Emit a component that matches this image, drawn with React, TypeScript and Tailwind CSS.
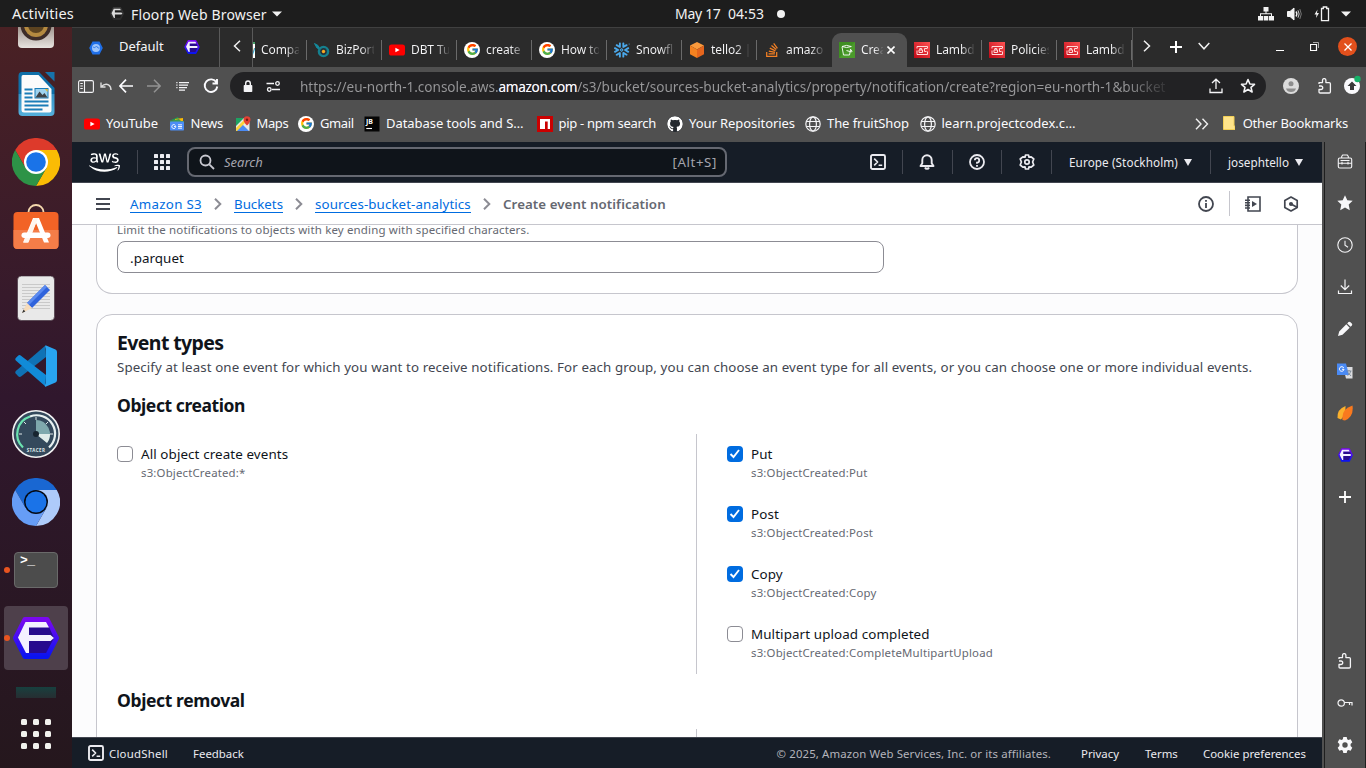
import type { ReactNode } from "react";
import { FaAws, FaGithub, FaStackOverflow } from "react-icons/fa";
import { FcGoogle } from "react-icons/fc";
import { SiSnowflake } from "react-icons/si";

/* ---------- shared drawings ---------- */

function Floorp({ className, mono = false }: { className: string; mono?: boolean }) {
  const id = mono ? "fl-mono" : "fl-color";
  return (
    <svg viewBox="0 0 46 42" className={className}>
      <defs>
        <linearGradient id={id} x1="0" y1="0" x2="0" y2="1">
          <stop offset="0" stopColor={mono ? "#3a3a3a" : "#7a08f0"} />
          <stop offset="1" stopColor={mono ? "#2a2a2a" : "#0a14f0"} />
        </linearGradient>
      </defs>
      <path d="M12 2.500H34L43.500 21L34 39.500H12L2.500 21Z" fill={`url(#${id})`} stroke={`url(#${id})`} strokeWidth="5" strokeLinejoin="round" />
      <path d="M16 10H36L41 21L33 36H16Z" fill={mono ? "#1d1d1d" : "#270a8e"} />
      <path d="M12.500 5H33L36 10.500H16V18H37.500L41 21L37.500 24H16V36H13L5 20.500Z" fill={mono ? "#dcdcdc" : "#f3f0ff"} />
    </svg>
  );
}

function YouTube() {
  return (
    <svg viewBox="0 0 16 16" className="size-4 shrink-0">
      <rect x="0" y="2.500" width="16" height="11" rx="2.600" fill="#f00" />
      <path d="M6.400 5.700L10.600 8L6.400 10.300Z" fill="#fff" />
    </svg>
  );
}

function Google() {
  return (
    <span className="flex size-4 shrink-0 items-center justify-center rounded-full bg-white">
      <FcGoogle className="size-[13px]" />
    </span>
  );
}

function Globe() {
  return (
    <svg viewBox="0 0 16 16" className="size-4 shrink-0" fill="none" stroke="#f4f4f6" strokeWidth="1.200">
      <circle cx="8" cy="8" r="7.200" />
      <ellipse cx="8" cy="8" rx="3.400" ry="7.200" />
      <path d="M1.500 5.500H14.500M1.500 10.500H14.500" />
    </svg>
  );
}

function Puzzle({ className }: { className: string }) {
  return (
    <svg viewBox="0 0 16 16" className={className} fill="none" stroke="#f4f4f6" strokeWidth="1.300" strokeLinejoin="round">
      <path d="M2 6V4.600H5.500V2.300A1.700 1.700 0 0 1 8.900 2.300V4.600H12.200Q13.400 4.600 13.400 5.800V13.800Q13.400 15 12.200 15H3.200Q2 15 2 13.800V11.500H4A1.500 1.500 0 0 0 4 8H2" />
    </svg>
  );
}

function LambdaTile() {
  return (
    <svg viewBox="0 0 16 16" className="size-4 shrink-0">
      <defs>
        <linearGradient id="iam" x1="0" y1="1" x2="1" y2="0">
          <stop offset="0" stopColor="#bd0816" />
          <stop offset="1" stopColor="#ff5252" />
        </linearGradient>
      </defs>
      <rect width="16" height="16" fill="url(#iam)" />
      <g fill="none" stroke="#ffdada" strokeWidth="1">
        <path d="M3 6.500V4.500H13.500V6M3 8.500V12.500H13.500V9.500" />
        <path d="M5 8H8.500V10.500H5ZM5.800 8V6.500H7.700V8M13.500 6.500H10.500V9.500H12.500" />
      </g>
    </svg>
  );
}

function Prompt({ className }: { className: string }) {
  return (
    <svg viewBox="0 0 16 16" className={className} fill="none" stroke="currentColor" strokeWidth="1.900" strokeLinejoin="round">
      <rect x="1" y="1" width="14" height="14" rx="1.500" />
      <path d="M4.200 4.600L7.600 8L4.200 11.400M8.600 11.200H12.200" strokeWidth="1.600" />
    </svg>
  );
}

/* ---------- top bar ---------- */

function TopBar() {
  return (
    <header className="flex h-[27px] shrink-0 items-center bg-[#1d1d1d] text-sm text-[#f2f2f2]">
      <div className="flex w-[600px] items-center pl-3">
        <span className="w-[98px] text-[14.500px] tracking-[0.140px]">Activities</span>
        <Floorp mono className="h-[13px] w-[14px]" />
        <span className="mt-[2px] ml-[7px] tracking-[0.160px]">Floorp Web Browser</span>
        <svg viewBox="0 0 10 6" className="ml-[5px] h-[6px] w-[10px]" fill="#f2f2f2"><path d="M0 0.500H10L5 5.500Z" /></svg>
      </div>
      <div className="flex flex-1 items-center pl-[75px]">
        <span className="w-[53px] tracking-[-0.300px]">May 17</span>
        <span className="tracking-[0.040px]">04:53</span>
        <span className="ml-[13px] size-2 rounded-full bg-[#f2f2f2]" />
      </div>
      <div className="flex items-center pr-[15px]">
        <svg viewBox="0 0 16 14" className="h-[14px] w-4" fill="#f2f2f2">
          <path d="M5.500 0H10.500V4.500H5.500ZM0 9H5V13.500H0ZM5.700 9H10.300V13.500H5.700ZM11 9H16V13.500H11ZM7.500 4.500H8.500V6.200H14V9H13V7.200H3V9H2V6.200H7.500Z" />
        </svg>
        <svg viewBox="0 0 16 14" className="ml-[13px] h-[14px] w-4" fill="none" stroke="#f2f2f2">
          <path d="M0.500 4.500H3L7 1V13L3 9.500H0.500Z" fill="#f2f2f2" />
          <path d="M9 4.500Q10.800 7 9 9.500" strokeWidth="1.300" />
          <path d="M11 3.300Q13.300 7 11 10.700" stroke="#ccc" />
          <path d="M12.800 2Q15.800 7 12.800 12" stroke="#777" />
        </svg>
        <svg viewBox="0 0 16 16" className="ml-[11px] size-4" fill="none" stroke="#f2f2f2" strokeWidth="1.300">
          <path d="M7.500 2.500H9.300V1H12.700V2.500H14.500V14.700H7.500Z" />
          <path d="M3.500 3.500L0.500 8.500H2.500L2 12L5 7H3Z" fill="#f2f2f2" stroke="none" />
        </svg>
        <svg viewBox="0 0 10 6" className="ml-[11px] h-[6px] w-[10px]" fill="#f2f2f2"><path d="M0 0.500H10L5 5.500Z" /></svg>
      </div>
    </header>
  );
}

/* ---------- dock ---------- */

const wheel = {
  top: "M3.200 12A24 24 0 0 1 44.800 12L24 12L24 24L13.600 30Z",
  right: "M44.800 12A24 24 0 0 1 24 48L34.400 30L24 24L24 12Z",
  left: "M24 48A24 24 0 0 1 3.200 12L13.600 30L24 24L34.400 30Z",
};

function Wheel({ top, right, left, ring, hub, r }: { top: string; right: string; left: string; ring: string; hub: string; r: number }) {
  return (
    <svg viewBox="0 0 48 48" className="size-12">
      <path d={wheel.top} fill={top} />
      <path d={wheel.right} fill={right} />
      <path d={wheel.left} fill={left} />
      <circle cx="24" cy="24" r="12" fill={ring} />
      <circle cx="24" cy="24" r={r} fill={hub} />
    </svg>
  );
}

function DockItem({ children, running = false, active = false }: { children: ReactNode; running?: boolean; active?: boolean }) {
  return (
    <div className="flex h-[68px] w-[72px] shrink-0 items-center justify-center">
      <div className={active ? "relative flex size-16 items-center justify-center rounded-[4px] bg-[#4e404b]" : "relative flex size-16 items-center justify-center"}>
        {running && <span className="absolute left-0 size-[6px] rounded-full bg-[#e95420]" />}
        {children}
      </div>
    </div>
  );
}

function Dock() {
  return (
    <nav className="flex w-[72px] shrink-0 flex-col bg-gradient-to-b from-[#4a2124] via-[#30172d] to-[#25171d]">
      <div className="flex h-[671px] flex-col overflow-hidden">
        <div className="-mt-[35px] flex flex-col">
          <DockItem>
            <svg viewBox="0 0 36 46" className="h-[46px] w-9">
              <defs>
                <linearGradient id="spk" x1="0" y1="0" x2="0" y2="1"><stop offset="0.400" stopColor="#8d7f78" /><stop offset="1" stopColor="#e8e4e0" /></linearGradient>
              </defs>
              <rect width="36" height="45" rx="4" fill="url(#spk)" />
              <circle cx="18" cy="22" r="15.500" fill="#3d2c28" />
              <circle cx="18" cy="22" r="12" fill="#b48a40" />
              <circle cx="18" cy="22" r="8" fill="#5c4320" />
            </svg>
          </DockItem>
          <DockItem>
            <svg viewBox="0 0 37 46" className="h-[46px] w-[37px]">
              <defs>
                <linearGradient id="wr" x1="0" y1="0" x2="0" y2="1"><stop offset="0.500" stopColor="#0f6fa8" /><stop offset="0.510" stopColor="#3593c6" /><stop offset="1" stopColor="#55b0dc" /></linearGradient>
              </defs>
              <path d="M4 1H21L36.500 17V41Q36.500 45 32.500 45H4.500Q0.500 45 0.500 41V5Q0.500 1 4 1Z" fill="url(#wr)" />
              <path d="M27 1H36.500V10.500Z" fill="#1673ab" />
              <path d="M5 4H20.500L33.500 18V39.500Q33.500 41.500 31.500 41.500H6Q3.500 41.500 3.500 39V6Q3.500 4 5 4Z" fill="#fbfbfb" />
              <path d="M6.500 18.500H14.500M6.500 22.500H14.500M6.500 26.500H14.500M6.500 30.500H30.500M6.500 34.500H30.500M6.500 38.500H24.500" stroke="#1b7db8" strokeWidth="2" />
              <rect x="16.500" y="17" width="14" height="10.500" fill="#1b7db8" />
              <rect x="17.500" y="18" width="12" height="8.500" fill="#9fd3ef" />
              <path d="M17.500 26.500L21.500 20.500L24.500 24L26.500 22L29.500 26.500Z" fill="#3f4347" />
              <path d="M27 18H29.500V21Z" fill="#f6b913" />
            </svg>
          </DockItem>
          <DockItem><Wheel top="#dd3a2b" right="#fbbc04" left="#2d9347" ring="#fff" hub="#1a73e8" r={9.800} /></DockItem>
          <DockItem>
            <svg viewBox="0 0 46 48" className="-mt-[6px] h-12 w-[46px]">
              <path d="M15.500 12V9A7.500 7 0 0 1 30.500 9V12" fill="none" stroke="#f5d9ae" strokeWidth="1.800" />
              <rect x="0.500" y="9" width="45" height="37" rx="4" fill="#f26326" />
              <path d="M0.500 27H45.500V42Q45.500 46 41.500 46H4.500Q0.500 46 0.500 42Z" fill="#f47d48" />
              <path d="M20 15H26L36 39.500H31L23 20L15 39.500H10Z" fill="#fff" />
              <path d="M21 15H25L15.500 39.500H10.500Z" fill="#fff6ef" />
              <rect x="8.500" y="29.500" width="29" height="5.500" rx="2.700" fill="#fff" />
            </svg>
          </DockItem>
          <DockItem>
            <svg viewBox="0 0 38 46" className="h-[46px] w-[38px]">
              <rect x="0.500" y="1" width="37" height="44.500" rx="4" fill="#e9e9e9" stroke="#3a2a35" strokeWidth="0.600" />
              <path d="M5 9.500H33M5 12.500H33M5 15.500H33M5 18.500H33M5 21.500H33M5 24.500H33M5 27.500H33M5 30.500H33M5 33.500H33" stroke="#c9c9c9" />
              <path d="M28 10L33 15L15 33L10 28Z" fill="#2f63dc" />
              <path d="M28 10L30 12L12 30L10 28Z" fill="#5a8af0" />
              <path d="M10 28L15 33L5 38Z" fill="#f6dcbb" />
              <path d="M6.600 34.500L8.300 36.400L5 38Z" fill="#333" />
            </svg>
          </DockItem>
          <DockItem>
            <svg viewBox="0 0 42 42" className="size-[42px]">
              <path d="M30.500 0.500L31 12L6 31.500Q4.500 32.500 3 31L0.700 28.500Q-0.300 27.300 0.800 26Z" fill="#0f72b5" />
              <path d="M31 30L30.500 41.500L0.800 15.500Q-0.300 14.300 0.800 13L3 10.800Q4.500 9.500 6 10.700Z" fill="#118bd8" />
              <path d="M30.500 0.300L40.500 4.500Q42 5.300 42 7V35Q42 36.700 40.500 37.500L30.500 41.800Q29 41.500 31 38V4Q29.500 1 30.500 0.300Z" fill="#28a4f0" />
            </svg>
          </DockItem>
          <DockItem>
            <svg viewBox="0 0 48 48" className="size-12">
              <circle cx="24" cy="24" r="23.200" fill="#34495c" stroke="#f2f2f2" strokeWidth="1.600" />
              <path d="M11 37.500A18.500 18.500 0 0 1 18 6.500" fill="none" stroke="#6be3b0" strokeWidth="2.200" />
              <path d="M18 6.500A18.500 18.500 0 0 1 37 37.500" fill="none" stroke="#e8f1f1" strokeWidth="2.200" />
              <path d="M24 24V10A14 14 0 0 1 35 32.500Z" fill="#7fa9ad" />
              <path d="M24 24L38 24A14 14 0 0 1 35 33Z" fill="#e0ece9" />
              <circle cx="24" cy="24" r="3" fill="#17242f" />
              <path d="M24 7V10M7 24H10M38 24H41M12 12L14 14M36 12L34 14" stroke="#dfe8e8" strokeWidth="1" />
              <text x="24" y="41.500" textAnchor="middle" fontSize="4.500" fontWeight="700" letterSpacing="0.400" fill="#dfe8e8">STACER</text>
            </svg>
          </DockItem>
          <DockItem><Wheel top="#1967d2" right="#aecbfa" left="#669df6" ring="#050a14" hub="#1a73e8" r={10.500} /></DockItem>
          <DockItem running>
            <div className="flex h-9 w-11 items-start rounded-[4px] border border-[#6a6a6a] bg-[#4c4c4c] pl-[5px] font-['Liberation_Mono'] text-[13px] leading-4 font-bold tracking-[-0.500px] text-white">&gt;_</div>
          </DockItem>
          <DockItem running active><Floorp className="h-[42px] w-[46px]" /></DockItem>
          <DockItem>
            <div className="h-[38px] w-10 bg-gradient-to-b from-[#16403f] to-[#2a1a24] to-60%" />
          </DockItem>
        </div>
      </div>
      <div className="mt-px grid flex-1 grid-cols-[6px_6px_6px] grid-rows-[6px_6px_6px] content-center justify-center gap-[6px]">
        {[0, 1, 2, 3, 4, 5, 6, 7, 8].map((i) => <span key={i} className="rounded-[1.500px] bg-[#f2f2ee]" />)}
      </div>
    </nav>
  );
}

/* ---------- tab strip ---------- */

function Cube() {
  return (
    <svg viewBox="0 0 16 16" className="size-4 shrink-0">
      <path d="M8 0L15 3.600L8 7.400L1 3.600Z" fill="#fb9a3c" />
      <path d="M1 3.600L8 7.400V16L1 12.300Z" fill="#f58220" />
      <path d="M15 3.600L8 7.400V16L15 12.300Z" fill="#e5651d" />
    </svg>
  );
}

function BizPortal() {
  return (
    <svg viewBox="0 0 16 16" className="size-4 shrink-0">
      <path d="M0.500 1.500L4 3.500L6 7L3 6Z" fill="#158a9c" stroke="#158a9c" />
      <circle cx="9.500" cy="9.500" r="4.600" fill="#24333a" stroke="#15808f" strokeWidth="2.400" />
      <circle cx="9.500" cy="9.500" r="1.700" fill="#f6a821" />
    </svg>
  );
}

function Bucket() {
  return (
    <svg viewBox="0 0 16 16" className="size-4 shrink-0">
      <rect width="16" height="16" fill="#3f8f22" />
      <path d="M0 16L16 0V16Z" fill="#54a332" opacity="0.600" />
      <path d="M3 4.800L4.500 13H10.500L11.700 7M3 4.500Q7.500 2.300 12.300 4.500Q7.500 6.600 3 4.500M7.500 8.500L12.500 10Q14 9.500 11.700 7.500" fill="none" stroke="#fff" strokeWidth="0.900" />
    </svg>
  );
}

const tabs: { label: string; icon: ReactNode }[] = [
  { label: "Compa", icon: <span className="size-4 shrink-0 border-t-2 border-[#4aa36a] bg-white text-right text-[11px] leading-3 text-[#158a9c]">y</span> },
  { label: "BizPort", icon: <BizPortal /> },
  { label: "DBT Tu", icon: <YouTube /> },
  { label: "create", icon: <Google /> },
  { label: "How to", icon: <Google /> },
  { label: "Snowfl", icon: <SiSnowflake className="size-4 shrink-0 text-[#4aa8ea]" /> },
  { label: "tello2 |", icon: <Cube /> },
  { label: "amazon", icon: <FaStackOverflow className="size-4 shrink-0 text-[#f48024]" /> },
  { label: "Crea", icon: <Bucket /> },
  { label: "Lambd", icon: <LambdaTile /> },
  { label: "Policies", icon: <LambdaTile /> },
  { label: "Lambd", icon: <LambdaTile /> },
];

function TabStrip() {
  return (
    <div className="flex h-10 shrink-0 items-stretch border-t border-[#404040] bg-[#2b2b2b] text-[#f6f6f8]">
      <div className="flex w-[148px] items-center border-r border-[#5a5a5a] pl-[17px] text-[13px]">
        <svg viewBox="0 0 14 14" className="size-[14px]">
          <path d="M3.500 0.500H10.500L13.800 7L10.500 13.500H3.500L0.200 7Z" fill="#1f6fe8" />
          <circle cx="7" cy="7" r="4" fill="#9cc4fb" />
          <path d="M4 6Q6 8 7.500 5Q9 8 10.500 7" stroke="#3b82ec" fill="none" />
        </svg>
        <span className="-mt-[2px] ml-4 w-[65px]">Default</span>
        <Floorp className="-mt-[2px] h-[14px] w-4" />
      </div>
      <div className="flex w-[33px] items-center justify-center border-r border-[#5a5a5a] pb-[3px] pl-[2px]">
        <svg viewBox="0 0 8 12" className="h-3 w-2" fill="none" stroke="#f0f0f0" strokeWidth="1.500"><path d="M7 0.700L1.500 6L7 11.300" /></svg>
      </div>
      <div className="flex w-[879px] justify-end overflow-hidden text-xs tracking-[-0.100px]">
        {tabs.map((t, i) => (
          <div key={i} className={i === 8 ? "flex w-[75px] shrink-0 flex-col justify-end" : "flex w-[75px] shrink-0 flex-col justify-center pt-[4px]"}>
            <div className={i === 8 ? "flex h-[34px] items-center rounded-t-[9px] bg-[#505050] pl-[7px]" : i === 7 ? "flex h-5 items-center pl-[7px]" : "flex h-5 items-center border-r border-[#6a6a6a] pl-[7px]"}>
              {t.icon}
              <span className={i === 8
                ? "ml-[6px] w-[22px] overflow-hidden bg-gradient-to-r from-[#f6f6f8] from-60% to-[#f6f6f8]/10 bg-clip-text whitespace-nowrap text-transparent"
                : "ml-[6px] w-[38px] overflow-hidden bg-gradient-to-r from-[#f6f6f8] from-65% to-[#f6f6f8]/10 bg-clip-text whitespace-nowrap text-transparent"}>{t.label}</span>
              {i === 8 && <svg viewBox="0 0 8 8" className="ml-1 size-2 shrink-0" stroke="#fff" strokeWidth="1.600"><path d="M0.500 0.500L7.500 7.500M7.500 0.500L0.500 7.500" /></svg>}
            </div>
          </div>
        ))}
      </div>
      <div className="flex flex-1 items-center border-l border-[#5a5a5a] pl-[10px]">
        <svg viewBox="0 0 8 12" className="mb-[3px] h-3 w-2" fill="none" stroke="#f0f0f0" strokeWidth="1.500"><path d="M1 0.700L6.500 6L1 11.300" /></svg>
        <svg viewBox="0 0 12 12" className="mb-[2px] ml-[19px] size-3" stroke="#fff" strokeWidth="2"><path d="M6 0V12M0 6H12" /></svg>
        <svg viewBox="0 0 12 8" className="mb-[3px] ml-4 h-2 w-3" fill="none" stroke="#f0f0f0" strokeWidth="1.500"><path d="M0.700 1L6 6.800L11.300 1" /></svg>
        <span className="mt-[5px] ml-[66px] h-px w-2 bg-white" />
        <svg viewBox="0 0 9 9" className="mb-[2px] ml-[26px] size-[9px]" fill="none" stroke="#fff"><path d="M0.500 2.500H6.500V8.500H0.500Z" strokeWidth="1.200" /><path d="M3 0.500H8.500V6" stroke="#aaa" /></svg>
        <span className="mb-[2px] ml-[19px] flex size-[19px] items-center justify-center rounded-full bg-[#e2501c]">
          <svg viewBox="0 0 8 8" className="size-2" stroke="#fff" strokeWidth="1.300"><path d="M0.500 0.500L7.500 7.500M7.500 0.500L0.500 7.500" /></svg>
        </span>
      </div>
    </div>
  );
}

/* ---------- navigation bar ---------- */

function NavBar() {
  return (
    <div className="flex h-[38px] shrink-0 items-center pl-[6px]">
      <svg viewBox="0 0 16 13" className="h-[13px] w-4 shrink-0" fill="none" stroke="#f4f4f6" strokeWidth="1.100">
        <rect x="0.600" y="0.600" width="14.800" height="11.800" rx="1.500" />
        <path d="M6.500 0.600V12.400M2.300 3.500H4.800M2.300 6H4.800M2.300 8.500H4.800" />
      </svg>
      <svg viewBox="0 0 12 9" className="ml-[6px] h-[9px] w-3 shrink-0" fill="none" stroke="#dcdcdc" strokeWidth="1.400"><path d="M1 0.500V5H5.500M1.300 4.500Q5 1 8.500 2.800Q11 4.300 11 8" /></svg>
      <svg viewBox="0 0 14 14" className="ml-[7px] size-[14px] shrink-0" fill="none" stroke="#fbfbfe" strokeWidth="1.700"><path d="M7 0.700L0.900 7L7 13.300M1 7H14" /></svg>
      <svg viewBox="0 0 14 14" className="ml-[14px] size-[14px] shrink-0" fill="none" stroke="#929292" strokeWidth="1.500"><path d="M7 0.700L13.100 7L7 13.300M13 7H0" /></svg>
      <svg viewBox="0 0 13 9" className="ml-[15px] h-[9px] w-[13px] shrink-0" stroke="#f4f4f6" strokeWidth="1.200"><path d="M3 0.700H13M3 3.200H12M3 5.700H11M3 8.200H9M0.300 0.700H1.500M0.300 3.200H1.500M0.300 5.700H1.500" /></svg>
      <svg viewBox="0 0 16 16" className="ml-[14px] size-4 shrink-0" fill="none" stroke="#fbfbfe" strokeWidth="1.900"><path d="M13.500 4.500A6.300 6.300 0 1 0 14.300 8.500M14 1V5.500H9.500" /></svg>
      <div className="ml-[11px] flex h-7 w-[1036px] shrink-0 items-center rounded-full bg-[#222224] pl-[13px]">
        <svg viewBox="0 0 10 13" className="h-[13px] w-[10px]"><rect x="0.700" y="5" width="8.600" height="7" rx="0.800" fill="#f4f4f6" /><path d="M2.700 5.500V3.300A2.300 2.300 0 0 1 7.300 3.300V5.500" fill="none" stroke="#f4f4f6" strokeWidth="1.400" /></svg>
        <svg viewBox="0 0 15 11" className="ml-[13px] h-[11px] w-[15px]" fill="none" stroke="#f4f4f6" strokeWidth="1.300"><circle cx="11.500" cy="2.500" r="1.800" /><circle cx="3.300" cy="8.500" r="1.800" /><path d="M0.500 2.500H8M6 8.500H14" /></svg>
        <div className="mt-[2px] ml-[19px] flex w-[868px] overflow-hidden bg-gradient-to-r from-[#98989a] from-95% to-[#98989a]/10 bg-clip-text text-[13.600px] whitespace-nowrap text-transparent">
          <span className="tracking-[-0.040px]">https://eu-north-1.console.aws.</span>
          <span className="tracking-[-0.350px] text-[#fbfbfe]">amazon.com</span>
          <span>/s3/bucket/sources-bucket-analytics/property/notification/create?region=eu-north-1&amp;bucket</span>
        </div>
        <svg viewBox="0 0 14 16" className="ml-[41px] h-4 w-[14px]" fill="none" stroke="#f4f4f6" strokeWidth="1.300"><path d="M7 11V1.300M3 5L7 1.200L11 5M1 10.500V14.500H13V10.500" /></svg>
        <svg viewBox="0 0 16 16" className="ml-[17px] size-4" fill="none" stroke="#f4f4f6" strokeWidth="1.600" strokeLinejoin="round"><path d="M8 1.500L9.900 6L14.500 6.300L11 9.400L12.100 14L8 11.500L3.900 14L5 9.400L1.500 6.300L6.100 6Z" /></svg>
      </div>
      <svg viewBox="0 0 16 16" className="ml-[17px] size-4 shrink-0"><circle cx="8" cy="8" r="8" fill="#dcdcdc" /><circle cx="8" cy="5.800" r="2.500" fill="#8d8d8d" /><path d="M3 10.500H13Q12 14 8 14Q4 14 3 10.500Z" fill="#8d8d8d" /></svg>
      <Puzzle className="ml-[18px] size-4 shrink-0" />
      <svg viewBox="0 0 20 20" className="mb-[3px] ml-[10px] size-5 shrink-0"><circle cx="9" cy="11" r="8" fill="#fbfbfe" /><path d="M9 6.500L13.500 11H11V15H7V11H4.500Z" fill="#3a3a3a" /><circle cx="14.500" cy="4" r="3.200" fill="#17b169" /></svg>
    </div>
  );
}

/* ---------- bookmarks ---------- */

function Bookmark({ icon, label, className }: { icon: ReactNode; label: string; className: string }) {
  return <div className={`flex shrink-0 items-center gap-[6px] whitespace-nowrap ${className}`}>{icon}<span>{label}</span></div>;
}

function Bookmarks() {
  return (
    <div className="flex h-[37px] shrink-0 items-center pl-3 text-[13px] text-[#fbfbfe]">
      <Bookmark className="w-[84.500px] tracking-[-0.080px]" label="YouTube" icon={<YouTube />} />
      <Bookmark className="w-[66px] tracking-[-0.200px]" label="News" icon={
        <svg viewBox="0 0 16 16" className="size-4"><path d="M2 4L9 1L11 6Z" fill="#1e9c50" /><path d="M6 3L14 2V8H6Z" fill="#fbbc04" /><path d="M1 4.500H3L10 3L12 5L15 5V7H1Z" fill="#3f9b4f" /><rect x="1" y="5.500" width="14" height="9" rx="0.800" fill="#4d8df6" /><path d="M6.500 9.500A2 2 0 1 0 6.800 10.500H5M9 8.800H13M9 10.500H13M9 12.200H13" stroke="#fff" fill="none" strokeWidth="0.900" /></svg>
      } />
      <Bookmark className="w-[63.500px] tracking-[-0.400px]" label="Maps" icon={
        <svg viewBox="0 0 16 16" className="size-4"><rect x="1" y="2" width="13.500" height="13" fill="#e8e8e8" /><path d="M1 2H9L1 10Z" fill="#1ea362" /><path d="M1 15L7 8L14 15Z" fill="#4b8bf4" /><path d="M1 12L10 3L12 5L2 15H1Z" fill="#fdd23c" /><path d="M12 9.500Q8.500 6 8.500 3.700A3.500 3.500 0 0 1 15.500 3.700Q15.500 6 12 9.500Z" fill="#e34133" /><circle cx="12" cy="3.800" r="1.200" fill="#7a1a12" /></svg>
      } />
      <Bookmark className="w-[66px] tracking-[-0.400px]" label="Gmail" icon={<Google />} />
      <Bookmark className="w-[172.500px] tracking-[-0.050px]" label="Database tools and S…" icon={
        <svg viewBox="0 0 16 16" className="size-4"><rect x="0.500" y="0.500" width="15" height="15" fill="#050505" /><text x="2" y="8" fontSize="7" fontWeight="700" fill="#fff">JB</text><path d="M2.300 12.500H8" stroke="#fff" strokeWidth="1.100" /></svg>
      } />
      <Bookmark className="w-[130.500px] tracking-[-0.290px]" label="pip - npm search" icon={
        <svg viewBox="0 0 16 16" className="size-4"><rect width="16" height="16" fill="#cb0000" /><path d="M3 3H13V13H10.700V5.500H8V13H3Z" fill="#fff" /></svg>
      } />
      <Bookmark className="w-[138px] tracking-[-0.060px]" label="Your Repositories" icon={
        <span className="flex size-4 items-center justify-center rounded-full bg-[#24292f]"><FaGithub className="size-4 rounded-full text-white" /></span>
      } />
      <Bookmark className="w-[114.500px] tracking-[-0.070px]" label="The fruitShop" icon={<Globe />} />
      <Bookmark className="flex-1 tracking-[0.020px]" label="learn.projectcodex.c…" icon={<Globe />} />
      <svg viewBox="0 0 14 12" className="h-3 w-[14px]" fill="none" stroke="#f0f0f0" strokeWidth="1.400"><path d="M1 0.700L6 6L1 11.300M7.500 0.700L12.500 6L7.500 11.300" /></svg>
      <svg viewBox="0 0 12 14" className="mb-[2px] ml-[14px] h-[14px] w-3"><path d="M0.500 0.500H11V10H12V13.500H0.500Z" fill="#ffe48a" stroke="#f2cf56" /></svg>
      <span className="mr-[18px] ml-[8px] tracking-[-0.180px]">Other Bookmarks</span>
    </div>
  );
}

/* ---------- AWS console ---------- */

function Rule({ className }: { className: string }) {
  return <span className={`h-6 w-px shrink-0 bg-[#424650] ${className}`} />;
}

function Caret({ className }: { className: string }) {
  return <svg viewBox="0 0 8 7" className={`h-[7px] w-2 ${className}`} fill="#ebebf0"><path d="M0 0H8L4 7Z" /></svg>;
}

function AwsHeader() {
  return (
    <div className="flex h-[41px] shrink-0 items-center border-b border-[#424650] bg-[#161d27] pl-[17px] text-[#ebebf0]">
      <FaAws className="h-[25px] w-[31px] text-white" />
      <Rule className="ml-[17px]" />
      <div className="ml-4 grid grid-cols-3 gap-[2px]">
        {[0, 1, 2, 3, 4, 5, 6, 7, 8].map((i) => <span key={i} className="size-1 rounded-[0.500px] bg-[#ebebf0]" />)}
      </div>
      <div className="ml-[17px] flex h-[30px] w-[540px] items-center rounded-lg border-2 border-[#656871] bg-[#0f141a] px-[10px] text-[13px]">
        <svg viewBox="0 0 16 16" className="size-4" fill="none" stroke="#c9c9d1" strokeWidth="1.800"><circle cx="6.500" cy="6.500" r="5" /><path d="M10.300 10.300L15 15" /></svg>
        <span className="mt-[2px] ml-[9px] flex-1 text-[#a4a4ad] italic">Search</span>
        <span className="mt-[2px] -mr-[2px] text-[13.300px] tracking-[0.600px] text-[#a4a4ad]">[Alt+S]</span>
      </div>
      <Prompt className="ml-[143px] size-4" />
      <Rule className="ml-4" />
      <svg viewBox="0 0 16 16" className="ml-4 size-4" fill="none" stroke="#ebebf0" strokeWidth="1.900" strokeLinejoin="round"><path d="M1.500 12H14.500L12.700 9.300V6A4.700 4.700 0 0 0 3.300 6V9.300Z" /><path d="M6 13.500A2.200 2.200 0 0 0 10 13.500" /></svg>
      <Rule className="ml-[17px]" />
      <svg viewBox="0 0 16 16" className="ml-4 size-4" fill="none" stroke="#ebebf0" strokeWidth="1.800"><circle cx="8" cy="8" r="7" /><path d="M5.800 6.300A2.200 2.200 0 1 1 8 8.600V9.800M8 11V12.700" /></svg>
      <Rule className="ml-4" />
      <svg viewBox="0 0 16 16" className="ml-[17px] size-4" fill="none" stroke="#ebebf0" strokeWidth="1.700" strokeLinejoin="round"><path d="M6.500 1H9.500L10 3.200L12.200 2.900L14.800 5L13.600 8L14.800 11L12.200 13.100L10 12.800L9.500 15H6.500L6 12.800L3.800 13.100L1.200 11L2.400 8L1.200 5L3.800 2.900L6 3.200Z" /><circle cx="8" cy="8" r="2.200" /></svg>
      <Rule className="ml-4" />
      <span className="mt-[2px] ml-[17px] w-[115px] text-[11.700px] tracking-[0.110px] whitespace-nowrap">Europe (Stockholm)</span>
      <Caret className="" />
      <Rule className="ml-[18px]" />
      <span className="mt-[2px] ml-[17px] w-[67px] text-[11.700px] tracking-[0.040px]">josephtello</span>
      <Caret className="" />
    </div>
  );
}

function Chevron() {
  return <svg viewBox="0 0 8 12" className="h-3 w-2 shrink-0" fill="none" stroke="#8c8c94" strokeWidth="2"><path d="M1 0.800L6.300 6L1 11.200" /></svg>;
}

function Crumb({ label, className }: { label: string; className: string }) {
  return <a className={`h-[18px] border-b border-[#006ce0] leading-[19px] whitespace-nowrap text-[#006ce0] ${className}`}>{label}</a>;
}

function Breadcrumbs() {
  return (
    <div className="flex h-[42px] shrink-0 items-center border-b border-[#c6c6cd] bg-white pl-6 text-[13.300px]">
      <svg viewBox="0 0 14 12" className="h-3 w-[14px]" stroke="#424650" strokeWidth="2"><path d="M0 1H14M0 6H14M0 11H14" /></svg>
      <Crumb label="Amazon S3" className="ml-5 w-[72px] tracking-[0.300px]" />
      <div className="ml-3 flex"><Chevron /></div>
      <Crumb label="Buckets" className="ml-3 w-[49px] tracking-[0px]" />
      <div className="ml-3 flex"><Chevron /></div>
      <Crumb label="sources-bucket-analytics" className="ml-3 w-[156px] tracking-[0.110px]" />
      <div className="ml-3 flex"><Chevron /></div>
      <span className="mt-[2px] ml-3 flex-1 font-semibold tracking-[0.070px] text-[#656871]">Create event notification</span>
      <svg viewBox="0 0 16 16" className="size-4" fill="none" stroke="#424650" strokeWidth="1.800"><circle cx="8" cy="8" r="7" /><path d="M8 4V5.800M8 7V12" /></svg>
      <span className="ml-[15px] h-[25px] w-px bg-[#c6c6cd]" />
      <svg viewBox="0 0 16 16" className="ml-[15px] size-4" fill="none" stroke="#424650" strokeWidth="1.600"><path d="M3 1H15V15H3ZM0 4.200H5M0 6.800H5M0 9.400H5M0 12H5" /><path d="M7 5V11L12 8Z" fill="#424650" stroke="none" /></svg>
      <svg viewBox="0 0 16 16" className="mr-[23px] ml-[22px] size-4" fill="none" stroke="#424650" strokeWidth="1.700" strokeLinejoin="round"><path d="M8 1L14.200 4.500V11.500L8 15L1.800 11.500V4.500Z" /><circle cx="8" cy="8" r="1.200" fill="#424650" /><path d="M8 8L14 11.300" /></svg>
    </div>
  );
}

function Check({ on = false }: { on?: boolean }) {
  return on ? (
    <span className="mt-[2px] flex size-4 shrink-0 items-center justify-center rounded-[4px] bg-[#006ce0]">
      <svg viewBox="0 0 16 16" className="size-4" fill="none" stroke="#fff" strokeWidth="1.900"><path d="M3.500 8L6.500 11L12 4" /></svg>
    </span>
  ) : (
    <span className="mt-[2px] size-4 shrink-0 rounded-[4px] border border-[#8c8c94] bg-white" />
  );
}

function Option({ label, note, on }: { label: string; note: string; on?: boolean }) {
  return (
    <div className="flex h-[60px] gap-2">
      <Check on={on} />
      <div>
        <div className="text-[13.400px] leading-5 tracking-[0.100px] text-[#0f141a]">{label}</div>
        <div className="mt-[0.500px] text-[11.400px] leading-4 tracking-[0.180px] text-[#656871]">{note}</div>
      </div>
    </div>
  );
}

function Content() {
  return (
    <main className="flex min-h-0 flex-1 flex-col overflow-hidden bg-[#fcfcfd] px-6">
      <section className="flex h-[69px] w-[1202px] shrink-0 flex-col rounded-b-2xl border border-t-0 border-[#c6c6cd] bg-white pl-5">
        <p className="-mt-[3px] h-[19px] text-[11.500px] leading-4 tracking-[0.145px] whitespace-nowrap text-[#656871]">Limit the notifications to objects with key ending with specified characters.</p>
        <div className="flex h-8 w-[767px] shrink-0 items-center rounded-lg border border-[#8c8c94] bg-white pt-[2px] pl-3 text-[13.400px] tracking-[0.050px] text-[#0f141a]">.parquet</div>
      </section>
      <section className="mt-5 flex h-[500px] w-[1202px] shrink-0 flex-col rounded-t-2xl border border-[#c6c6cd] bg-white px-5 pt-4">
        <h2 className="text-[19.500px] leading-6 font-bold tracking-[-0.620px] text-[#0f141a]">Event types</h2>
        <p className="mt-[2px] text-[13.300px] leading-5 tracking-[0.107px] whitespace-nowrap text-[#424650]">Specify at least one event for which you want to receive notifications. For each group, you can choose an event type for all events, or you can choose one or more individual events.</p>
        <h3 className="mt-[17px] text-[17.500px] leading-[23px] font-bold tracking-[-0.420px] text-[#0f141a]">Object creation</h3>
        <div className="mt-[17px] flex h-60 shrink-0">
          <div className="w-[579px] pt-[10px]">
            <Option label="All object create events" note="s3:ObjectCreated:*" />
          </div>
          <div className="border-l border-[#c6c6cd] pt-[10px] pl-[30px]">
            <Option on label="Put" note="s3:ObjectCreated:Put" />
            <Option on label="Post" note="s3:ObjectCreated:Post" />
            <Option on label="Copy" note="s3:ObjectCreated:Copy" />
            <Option label="Multipart upload completed" note="s3:ObjectCreated:CompleteMultipartUpload" />
          </div>
        </div>
        <h3 className="mt-[15px] text-[17.500px] leading-[23px] font-bold tracking-[-0.380px] text-[#0f141a]">Object removal</h3>
        <div className="mt-[17px] ml-[579px] flex-1 border-l border-[#c6c6cd]" />
      </section>
    </main>
  );
}

function Footer() {
  return (
    <footer className="flex h-[31px] shrink-0 items-center border-t border-[#424650] bg-[#161d27] pr-4 pl-4 text-[11.400px] text-[#ebebf0]">
      <Prompt className="size-4" />
      <span className="mt-[2px] ml-[5px] w-[84px] tracking-[0.230px]">CloudShell</span>
      <span className="mt-[2px] flex-1 tracking-[0.020px]">Feedback</span>
      <span className="mt-[2px] tracking-[0.120px] text-[#b4b4bb]">© 2025, Amazon Web Services, Inc. or its affiliates.</span>
      <span className="mt-[2px] ml-[30px] w-[64px]">Privacy</span>
      <span className="mt-[2px] w-[58px]">Terms</span>
      <span className="mt-[2px] w-[103px] whitespace-nowrap">Cookie preferences</span>
    </footer>
  );
}

/* ---------- right rail ---------- */

function Rail() {
  const cell = "flex h-[42px] items-center justify-center";
  return (
    <aside className="flex w-[44px] shrink-0 bg-[#505050] pl-[2px]">
      <div className="flex flex-1 flex-col border-x border-[#1f1f1f]">
        <div className="flex h-10 items-center justify-center">
          <svg viewBox="0 0 16 16" className="size-4" fill="none" stroke="#f4f4f6" strokeWidth="1.100"><rect x="1.300" y="4" width="13.400" height="10" rx="1.500" /><path d="M4.700 4V2.500L5.700 1H10.300L11.300 2.500V4M3.500 6.500H12.500M1.300 9.200H14.700M5 7.800V10.500M11 7.800V10.500" /></svg>
        </div>
        <div className={cell}><svg viewBox="0 0 16 16" className="size-4" fill="#f8f8fa"><path d="M8 0.300L10.300 5.200L15.700 5.800L11.700 9.500L12.800 15.200L8 12.400L3.200 15.200L4.300 9.500L0.300 5.800L5.700 5.200Z" /></svg></div>
        <div className={cell}><svg viewBox="0 0 16 16" className="size-4" fill="none" stroke="#f4f4f6" strokeWidth="1.100"><circle cx="8" cy="8" r="7.200" /><path d="M8 3.800V8.300L11 10.300" /></svg></div>
        <div className={cell}><svg viewBox="0 0 16 16" className="size-4" fill="none" stroke="#f4f4f6" strokeWidth="1.200"><path d="M8 0.500V10.500M3.800 6.500L8 10.600L12.200 6.500M1.500 11.500V14.500H14.500V11.500" /></svg></div>
        <div className={cell}><svg viewBox="0 0 16 16" className="size-4" fill="#f8f8fa"><path d="M1 15L2.200 10.500L9.300 3.300L12.700 6.700L5.500 13.800ZM10.200 2.400L11.500 1.100Q12.500 0.300 13.500 1.200L14.800 2.500Q15.700 3.500 14.900 4.500L13.600 5.800Z" /></svg></div>
        <div className={cell}>
          <svg viewBox="0 0 16 16" className="size-4"><path d="M6 4H15.500V15.500H9Z" fill="#dcdde0" /><path d="M0 0.500H9L12 12H0Z" fill="#4a8af4" /><path d="M6.800 5A2.300 2.300 0 1 0 7 6.300H5" fill="none" stroke="#fff" /><path d="M9.500 8H14.500M12 7V8M10.500 12.500Q13.500 11 13.700 8M11 9.500L14 13" stroke="#7a8794" fill="none" strokeWidth="0.900" /></svg>
        </div>
        <div className={cell}>
          <svg viewBox="0 0 16 16" className="size-4"><path d="M0.500 13Q0 4 8.500 1Q9 9 4 14.500Z" fill="#fbb02c" /><path d="M5.500 15Q4 4 15.500 0.500Q17 12 8 15.500Z" fill="#f9791e" /></svg>
        </div>
        <div className={cell}><Floorp className="h-[14px] w-[15px]" /></div>
        <div className={cell}><svg viewBox="0 0 12 12" className="size-3" stroke="#fff" strokeWidth="1.800"><path d="M6 0V12M0 6H12" /></svg></div>
        <div className="flex-1" />
        <div className={cell}><Puzzle className="size-4" /></div>
        <div className={cell}><svg viewBox="0 0 16 16" className="size-4" fill="none" stroke="#f4f4f6" strokeWidth="1.200"><circle cx="4.200" cy="8" r="3.200" /><path d="M7.400 7.500H15V10.500M12.500 7.500V10" /></svg></div>
        <div className={cell}><svg viewBox="0 0 16 16" className="size-4" fill="#f8f8fa" fillRule="evenodd"><path d="M6.300 0H9.700L10.200 2.300L11.300 2.900L13.600 2.200L15.300 5.200L13.600 6.900V9.100L15.300 10.800L13.600 13.800L11.300 13.100L10.200 13.700L9.700 16H6.300L5.800 13.700L4.700 13.100L2.400 13.800L0.700 10.800L2.400 9.100V6.900L0.700 5.200L2.400 2.200L4.700 2.900L5.800 2.300ZM8 5.300A2.700 2.700 0 1 0 8 10.700A2.700 2.700 0 1 0 8 5.300Z" /></svg></div>
        <div className="h-[2px]" />
      </div>
    </aside>
  );
}

export default function App() {
  return (
    <div className="flex h-[768px] w-[1366px] flex-col overflow-hidden font-['Noto_Sans','Liberation_Sans',sans-serif]">
      <TopBar />
      <div className="flex min-h-0 flex-1">
        <Dock />
        <div className="flex min-w-0 flex-1 flex-col bg-[#505050]">
          <TabStrip />
          <NavBar />
          <Bookmarks />
          <div className="flex min-h-0 flex-1">
            <div className="flex w-[1250px] shrink-0 flex-col">
              <AwsHeader />
              <Breadcrumbs />
              <Content />
              <Footer />
            </div>
            <Rail />
          </div>
        </div>
      </div>
    </div>
  );
}
